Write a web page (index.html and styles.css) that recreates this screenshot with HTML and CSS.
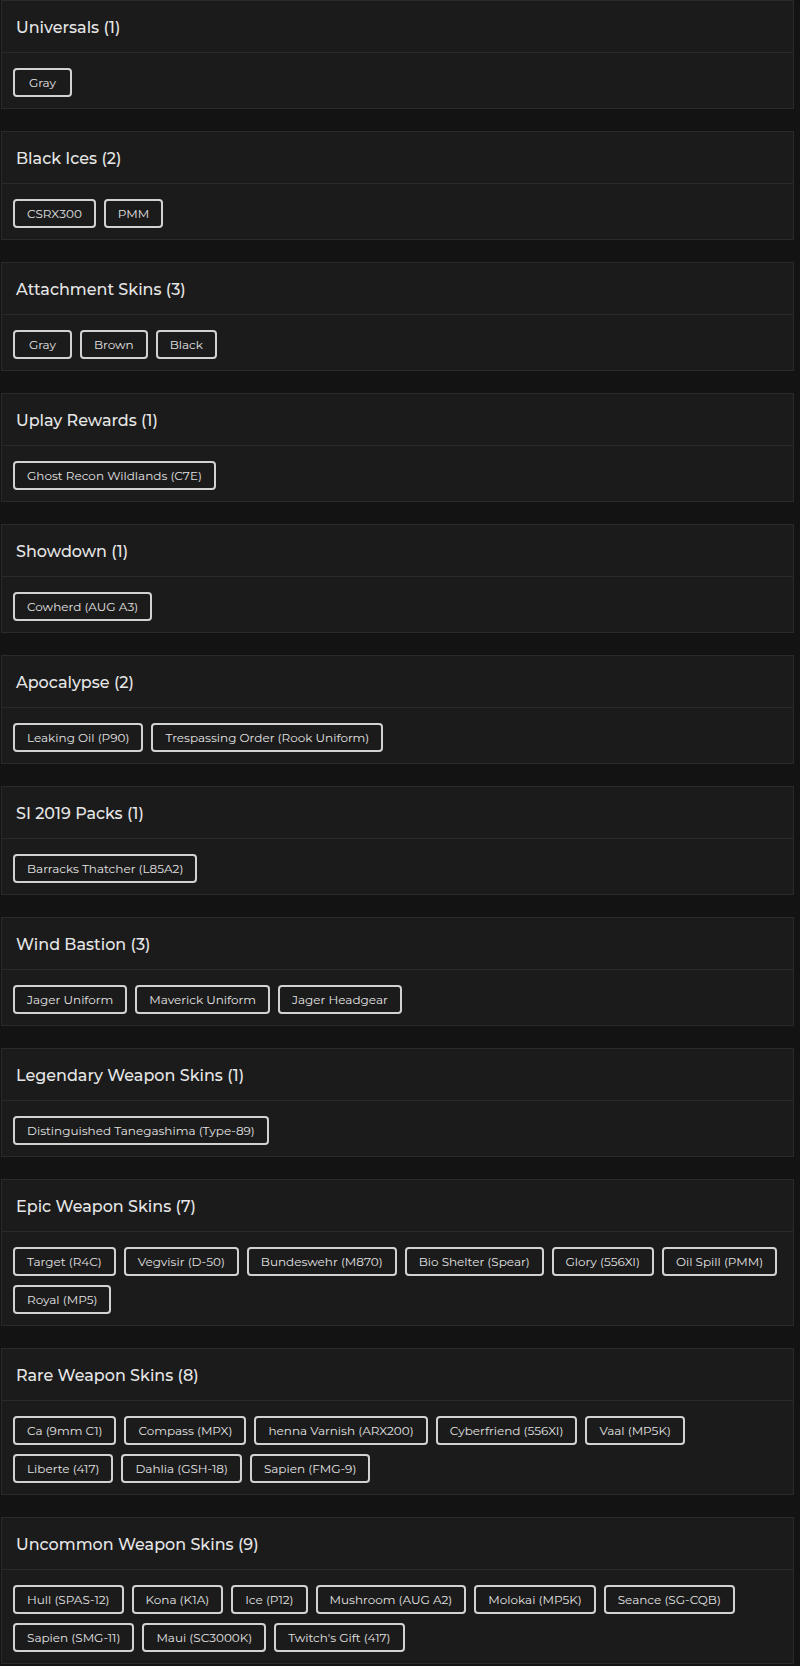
FILE: index.html
```html
<!DOCTYPE html>
<html lang="en">
<head>
<meta charset="utf-8">
<title>Skins</title>
<link rel="stylesheet" href="styles.css">
</head>
<body>
<div class="list">
  <section class="card">
    <div class="card-header">Universals (1)</div>
    <div class="card-body"><span class="tag">Gray</span></div>
  </section>
  <section class="card">
    <div class="card-header">Black Ices (2)</div>
    <div class="card-body"><span class="tag">CSRX300</span><span class="tag">PMM</span></div>
  </section>
  <section class="card">
    <div class="card-header">Attachment Skins (3)</div>
    <div class="card-body"><span class="tag">Gray</span><span class="tag">Brown</span><span class="tag">Black</span></div>
  </section>
  <section class="card">
    <div class="card-header">Uplay Rewards (1)</div>
    <div class="card-body"><span class="tag">Ghost Recon Wildlands (C7E)</span></div>
  </section>
  <section class="card">
    <div class="card-header">Showdown (1)</div>
    <div class="card-body"><span class="tag">Cowherd (AUG A3)</span></div>
  </section>
  <section class="card">
    <div class="card-header">Apocalypse (2)</div>
    <div class="card-body"><span class="tag">Leaking Oil (P90)</span><span class="tag">Trespassing Order (Rook Uniform)</span></div>
  </section>
  <section class="card">
    <div class="card-header">SI 2019 Packs (1)</div>
    <div class="card-body"><span class="tag">Barracks Thatcher (L85A2)</span></div>
  </section>
  <section class="card">
    <div class="card-header">Wind Bastion (3)</div>
    <div class="card-body"><span class="tag">Jager Uniform</span><span class="tag">Maverick Uniform</span><span class="tag">Jager Headgear</span></div>
  </section>
  <section class="card">
    <div class="card-header">Legendary Weapon Skins (1)</div>
    <div class="card-body"><span class="tag">Distinguished Tanegashima (Type-89)</span></div>
  </section>
  <section class="card">
    <div class="card-header">Epic Weapon Skins (7)</div>
    <div class="card-body"><span class="tag">Target (R4C)</span><span class="tag">Vegvisir (D-50)</span><span class="tag">Bundeswehr (M870)</span><span class="tag">Bio Shelter (Spear)</span><span class="tag">Glory (556XI)</span><span class="tag">Oil Spill (PMM)</span><span class="tag">Royal (MP5)</span></div>
  </section>
  <section class="card">
    <div class="card-header">Rare Weapon Skins (8)</div>
    <div class="card-body"><span class="tag">Ca (9mm C1)</span><span class="tag">Compass (MPX)</span><span class="tag">henna Varnish (ARX200)</span><span class="tag">Cyberfriend (556XI)</span><span class="tag">Vaal (MP5K)</span><span class="tag">Liberte (417)</span><span class="tag">Dahlia (GSH-18)</span><span class="tag">Sapien (FMG-9)</span></div>
  </section>
  <section class="card">
    <div class="card-header">Uncommon Weapon Skins (9)</div>
    <div class="card-body"><span class="tag">Hull (SPAS-12)</span><span class="tag">Kona (K1A)</span><span class="tag">Ice (P12)</span><span class="tag">Mushroom (AUG A2)</span><span class="tag">Molokai (MP5K)</span><span class="tag">Seance (SG-CQB)</span><span class="tag">Sapien (SMG-11)</span><span class="tag">Maui (SC3000K)</span><span class="tag">Twitch's Gift (417)</span></div>
  </section>
</div>
</body>
</html>
```

FILE: styles.css
```css
html, body {
  margin: 0;
  padding: 0;
  background: #131313;
}

body {
  font-family: Montserrat, Inter, "DejaVu Sans", sans-serif;
  color: #e4e4e4;
}

.list {
  display: flex;
  flex-direction: column;
  gap: 22px;
  padding: 0 6px 0 1px;
}

.card {
  background: #1b1b1b;
  border: 1px solid #2a2a2a;
}

.card-header {
  height: 52px;
  display: flex;
  align-items: center;
  padding: 2px 14px 0;
  box-sizing: border-box;
  border-bottom: 1px solid #2a2a2a;
  font-size: 16px;
  font-weight: 500;
  color: #e6e6e6;
}

.card-body {
  display: flex;
  flex-wrap: wrap;
  gap: 9px 8px;
  padding: 15px 11px 11px;
}

.tag {
  display: inline-block;
  box-sizing: border-box;
  min-width: 59px;
  text-align: center;
  border: 2px solid #d2d2d2;
  border-radius: 4px;
  padding: 4px 12px;
  font-size: 12px;
  line-height: 17px;
  color: #e2e2e2;
  white-space: nowrap;
}
```
